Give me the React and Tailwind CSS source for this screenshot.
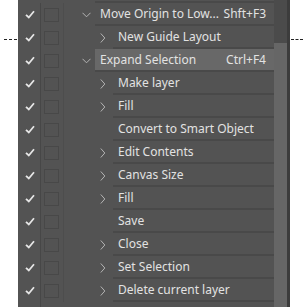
import React from "react";

const rows = [
  { level: 1, label: "Move Origin to Low...", shortcut: "Shft+F3", chev: "down" },
  { level: 2, label: "New Guide Layout", chev: "right" },
  { level: 1, label: "Expand Selection", shortcut: "Ctrl+F4", chev: "down", active: true },
  { level: 2, label: "Make layer", chev: "right" },
  { level: 2, label: "Fill", chev: "right" },
  { level: 2, label: "Convert to Smart Object" },
  { level: 2, label: "Edit Contents", chev: "right" },
  { level: 2, label: "Canvas Size", chev: "right" },
  { level: 2, label: "Fill", chev: "right" },
  { level: 2, label: "Save" },
  { level: 2, label: "Close", chev: "right" },
  { level: 2, label: "Set Selection", chev: "right" },
  { level: 2, label: "Delete current layer", chev: "right" },
];

function Check() {
  return (
    <svg width="10" height="9" viewBox="0 0 10 9" className="block">
      <path d="M1 4.8 L3.8 7.5 L9 1.2" fill="none" stroke="#e6e6e6" strokeWidth="1.8" />
    </svg>
  );
}

function ChevDown() {
  return (
    <svg width="9" height="6" viewBox="0 0 9 6" className="block">
      <path d="M0.5 0.8 L4.5 4.8 L8.5 0.8" fill="none" stroke="#b4b4b4" strokeWidth="1" />
    </svg>
  );
}

function ChevRight() {
  return (
    <svg width="6" height="10" viewBox="0 0 6 10" className="block">
      <path d="M0.8 0.5 L4.8 5 L0.8 9.5" fill="none" stroke="#b4b4b4" strokeWidth="1" />
    </svg>
  );
}

function Row({ r }) {
  const isL1 = r.level === 1;
  return (
    <div className="flex h-[23px]">
      <div className="w-[22px] flex items-center justify-center pl-[2px]">
        <Check />
      </div>
      <div className="w-px bg-[#474747]" />
      <div className="w-[22px] flex items-center pl-[3px]">
        <div className="w-[15px] h-[14px] border border-[#484848]" />
      </div>
      <div className="w-px bg-[#4d4d4d]" />
      <div className={isL1 ? "w-[31px] flex items-center justify-end pr-[4px]" : "w-[49px] flex items-center justify-end pr-[7px]"}>
        {r.chev === "down" && <ChevDown />}
        {r.chev === "right" && <ChevRight />}
      </div>
      <div className="flex-1 flex flex-col">
        <div
          className={
            "h-[21px] flex items-center justify-between pl-[5px] pr-[8px] pt-[1px] text-[12px] text-[#e2e2e2] " +
            (r.active ? "bg-[#686868]" : "bg-[#535353]")
          }
        >
          <span className="whitespace-nowrap">{r.label}</span>
          {r.shortcut && <span className="whitespace-nowrap">{r.shortcut}</span>}
        </div>
        <div className="h-[2px] bg-[#494949]" />
      </div>
    </div>
  );
}

export default function App() {
  return (
    <div className="w-[303px] h-[307px] bg-white relative overflow-hidden" style={{ fontFamily: '"Noto Sans", "Open Sans", sans-serif' }}>
      <div className="absolute left-[4px] top-[39px] w-[13px] border-t border-dashed border-[#222]" />
      <div className="absolute left-[291px] top-[39px] w-[12px] border-t border-dashed border-[#222]" />
      <div className="ml-[18px] w-[272px] h-[307px] flex bg-[#535353]">
        <div className="w-[256px] flex flex-col">
          <div className="h-[6px] flex">
            <div className="w-[77px]" />
            <div className="flex-1 flex flex-col justify-end">
              <div className="h-[2px] bg-[#494949]" />
            </div>
          </div>
          {rows.map((r, i) => (
            <Row key={i} r={r} />
          ))}
          <div className="flex h-[10px]">
            <div className="w-[22px]" />
            <div className="w-px bg-[#474747]" />
            <div className="flex-1" />
          </div>
        </div>
        <div className="w-[13px] flex flex-col bg-[#4b4b4b]">
          <div className="h-[43px]" />
          <div className="flex-1 bg-[#666666]" />
        </div>
        <div className="w-[3px] bg-[#3c3c3c]" />
      </div>
    </div>
  );
}
